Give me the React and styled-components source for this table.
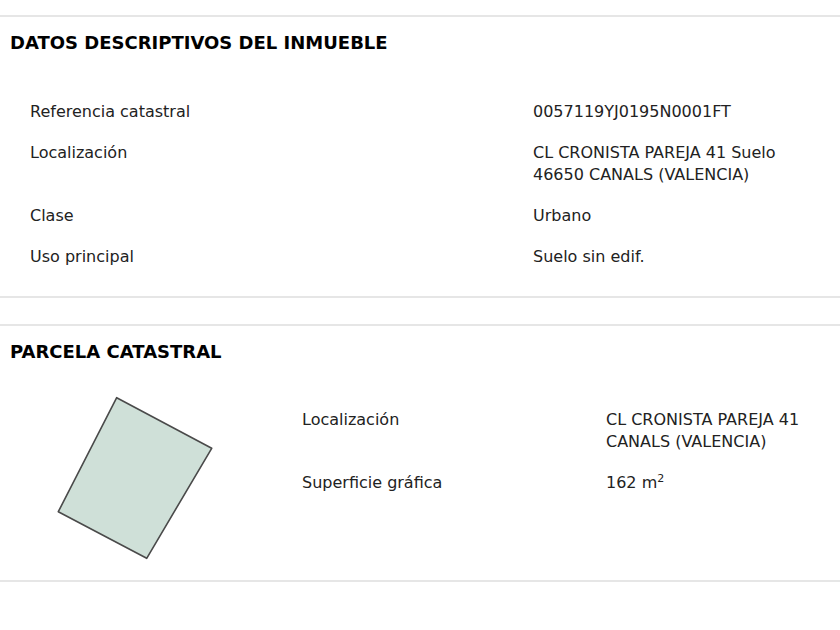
import React from "react";
import styled, { createGlobalStyle } from "styled-components";

const Global = createGlobalStyle`
  html, body { margin: 0; padding: 0; background: #fff; }
  body { font-family: "DejaVu Sans", Verdana, sans-serif; color: #222; }
`;

const Page = styled.div`
  padding-top: 15px;
  width: 840px;
`;

const Section = styled.section`
  border-top: 2px solid #e6e6e6;
  border-bottom: 2px solid #e6e6e6;
  padding-bottom: ${(p) => p.$pb || 19}px;
  margin-bottom: 26px;
`;

const Heading = styled.h2`
  margin: 0;
  padding: 15px 0 0 10px;
  font-size: 18px;
  line-height: 21px;
  font-weight: bold;
  color: #000;
`;

const Table = styled.div`
  display: grid;
  grid-template-columns: ${(p) => p.$label}px 1fr;
  align-content: start;
  align-self: start;
  padding-left: ${(p) => p.$pl}px;
  margin-top: ${(p) => p.$mt || 38}px;
`;

const Cell = styled.div`
  font-size: 16px;
  line-height: 22px;
  padding: 10px 0 9px;
  color: #222;
`;

const Body = styled.div`
  display: grid;
  grid-template-columns: 280px 1fr;
  align-items: start;
`;

const Sketch = styled.svg`
  display: block;
  margin-top: 25px;
`;

const Sup = styled.sup`
  font-size: 11px;
  line-height: 0;
  vertical-align: 6px;
`;

const Row = ({ label, children }) => (
  <>
    <Cell>{label}</Cell>
    <Cell>{children}</Cell>
  </>
);

export default function App() {
  return (
    <Page>
      <Global />
      <Section $pb={19}>
        <Heading>DATOS DESCRIPTIVOS DEL INMUEBLE</Heading>
        <Table $label={503} $pl={30}>
          <Row label="Referencia catastral">0057119YJ0195N0001FT</Row>
          <Row label="Localización">
            CL CRONISTA PAREJA 41 Suelo
            <br />
            46650 CANALS (VALENCIA)
          </Row>
          <Row label="Clase">Urbano</Row>
          <Row label="Uso principal">Suelo sin edif.</Row>
        </Table>
      </Section>
      <Section $pb={13}>
        <Heading>PARCELA CATASTRAL</Heading>
        <Body>
          <Sketch width="280" height="180" viewBox="0 0 280 180">
            <polygon
              points="116.7,10.7 211.7,61.3 146.7,171.3 58.3,124.7"
              fill="#cfe0d8"
              stroke="#4a4a4a"
              strokeWidth="1.6"
              strokeLinejoin="round"
            />
          </Sketch>
          <Table $label={304} $pl={22} $mt={37}>
            <Row label="Localización">
              CL CRONISTA PAREJA 41
              <br />
              CANALS (VALENCIA)
            </Row>
            <Row label="Superficie gráfica">
              162 m<Sup>2</Sup>
            </Row>
          </Table>
        </Body>
      </Section>
    </Page>
  );
}
